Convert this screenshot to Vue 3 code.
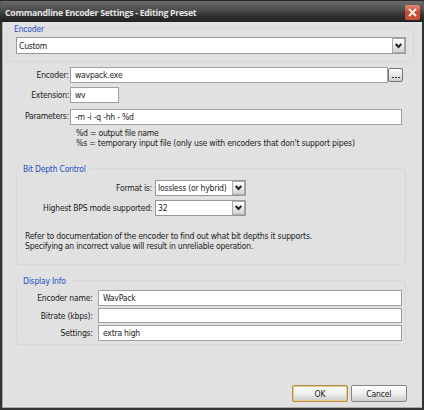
<template>
  <div class="window">
    <header class="title-bar">
      <h1 class="window-title"><span>Commandline Encoder Settings - Editing Preset</span></h1>
      <button class="close-button" aria-label="Close">
        <svg width="15" height="15" viewBox="0 0 15 15">
          <path d="M4 4L11 11M11 4L4 11" stroke="#fff5ee" stroke-width="2" />
        </svg>
      </button>
    </header>

    <main class="content">
      <!-- Encoder preset -->
      <section class="group group-encoder">
        <h2 class="group-title encoder-title"><span class="text">Encoder</span></h2>
        <div class="combo">
          <span class="combo-value"><span class="text">{{ preset }}</span></span>
          <span class="combo-button">
            <svg width="7" height="6" viewBox="0 0 7 6">
              <path d="M0.7 1L3.5 4L6.3 1" fill="none" stroke="#222" stroke-width="2" />
            </svg>
          </span>
        </div>
      </section>

      <!-- Command line -->
      <section class="command">
        <div v-for="field in commandFields" :key="field.key" class="field" :class="field.key">
          <label><span class="text">{{ field.label }}</span></label>
          <div class="field-input"><span class="text">{{ field.value }}</span></div>
          <button v-if="field.key === 'encoder'" class="browse"><i></i><i></i><i></i></button>
        </div>
        <p class="hint">
          <span class="text">%d = output file name</span><br>
          <span class="text wide">%s = temporary input file (only use with encoders that don't support pipes)</span>
        </p>
      </section>

      <!-- Bit depth -->
      <section class="group group-depth">
        <h2 class="group-title depth-title"><span class="text">Bit Depth Control</span></h2>
        <div v-for="mode in depthFields" :key="mode.key" class="field" :class="mode.key">
          <label><span class="text">{{ mode.label }}</span></label>
          <div class="combo">
            <span class="combo-value"><span class="text">{{ mode.value }}</span></span>
            <span class="combo-button">
              <svg width="7" height="6" viewBox="0 0 7 6">
                <path d="M0.7 1L3.5 4L6.3 1" fill="none" stroke="#222" stroke-width="2" />
              </svg>
            </span>
          </div>
        </div>
        <p class="note">
          <span class="text wide">Refer to documentation of the encoder to find out what bit depths it supports.</span><br>
          <span class="text">Specifying an incorrect value will result in unreliable operation.</span>
        </p>
      </section>

      <!-- Display info -->
      <section class="group group-display">
        <h2 class="group-title display-title"><span class="text">Display Info</span></h2>
        <div v-for="info in displayFields" :key="info.key" class="field" :class="info.key">
          <label><span class="text">{{ info.label }}</span></label>
          <div class="field-input"><span class="text">{{ info.value }}</span></div>
        </div>
      </section>

      <footer class="actions">
        <button class="action primary"><span class="text">OK</span></button>
        <button class="action"><span class="text">Cancel</span></button>
      </footer>
    </main>
  </div>
</template>

<script setup>
import { ref } from 'vue'

const preset = ref('Custom')

const commandFields = ref([
  { key: 'encoder', label: 'Encoder:', value: 'wavpack.exe' },
  { key: 'extension', label: 'Extension:', value: 'wv' },
  { key: 'parameters', label: 'Parameters:', value: '-m -i -q -hh - %d' }
])

const depthFields = ref([
  { key: 'format', label: 'Format is:', value: 'lossless (or hybrid)' },
  { key: 'bps', label: 'Highest BPS mode supported:', value: '32' }
])

const displayFields = ref([
  { key: 'name', label: 'Encoder name:', value: 'WavPack' },
  { key: 'bitrate', label: 'Bitrate (kbps):', value: '' },
  { key: 'settings', label: 'Settings:', value: 'extra high' }
])
</script>

<style>
body {
  background: #303030;
}
</style>

<style scoped>
.window {
  display: flex;
  flex-direction: column;
  box-sizing: border-box;
  width: 424px;
  height: 410px;
  padding: 0 2px 2px;
  overflow: hidden;
  border-radius: 4px 4px 0 0;
  background: #333;
  color: #222;
  font: 9.5px/10px "DejaVu Sans Condensed", "DejaVu Sans", sans-serif;
  font-stretch: condensed;
  white-space: nowrap;
}

.window * {
  box-sizing: border-box;
}

h1,
h2,
p {
  margin: 0;
  font-weight: normal;
}

button {
  padding: 0;
  font: inherit;
  color: inherit;
}

/* Narrow dialog lettering */
.text {
  display: inline-block;
  letter-spacing: -0.25px;
  transform: scaleX(0.9);
  transform-origin: left;
}

.text.wide {
  transform: scaleX(0.912);
}

label .text {
  transform-origin: right;
}

.action .text {
  transform-origin: center;
}

.title-bar {
  display: flex;
  flex: none;
  align-items: center;
  justify-content: space-between;
  height: 22px;
  margin: 0 -2px;
  padding: 2px 4px 0 5px;
  border-top: 1px solid #292929;
  background: linear-gradient(#6b6b6b, #4c4c4c 45%, #303030 70%, #222);
}

.window-title {
  font: bold 9.5px/12px "Open Sans", sans-serif;
  color: #e6e6e6;
}

.window-title span {
  display: inline-block;
  letter-spacing: -0.3px;
  transform: scaleX(0.92);
  transform-origin: left;
}

.close-button {
  display: flex;
  width: 15px;
  height: 15px;
  border: 0;
  border-radius: 2px;
  background: linear-gradient(#df8b78, #cf4830 50%, #c5523a);
}

.content {
  flex: 1;
  padding: 6px 7px 0 4px;
  border: 1px solid #aaa;
  border-top: 0;
  border-right-color: #ddd;
  background: #e1e1e1;
}

.group {
  position: relative;
  border: 1px solid #d8d8d8;
  border-radius: 3px;
}

.group-title {
  position: absolute;
  top: -6px;
  left: 3px;
  padding-left: 3px;
  background: #e1e1e1;
  color: #2551c4;
  font-size: 9.5px;
  line-height: 11px;
}

.encoder-title {
  width: 36px;
}

.depth-title {
  width: 70px;
}

.display-title {
  width: 51px;
}

.combo {
  display: flex;
  width: 91px;
  height: 16px;
  border: 1px solid #999;
  background: #fff;
}

.combo-value {
  flex: 1;
  min-width: 0;
  padding-left: 2px;
  line-height: 14px;
}

.combo-button {
  display: flex;
  flex: none;
  align-items: center;
  justify-content: center;
  width: 13px;
  border: 1px solid #aaa;
  background: linear-gradient(#fff, #d2d2d2);
}

.field {
  display: flex;
  align-items: center;
}

.field label {
  display: flex;
  flex: none;
  justify-content: flex-end;
}

.field-input {
  flex: 1;
  height: 16px;
  padding-left: 4px;
  border: 1px solid #a0a0a0;
  background: #fff;
  line-height: 14px;
}

.group-encoder {
  height: 34px;
  padding: 8px 8px 0;
}

.group-encoder .combo {
  width: 390px;
  height: 17px;
}

.group-encoder .combo-value {
  line-height: 16px;
}

.command {
  height: 106px;
  padding: 5px 12px 0 0;
}

.command label {
  width: 63px;
  padding-right: 1px;
}

.field.encoder {
  margin-right: -1px;
}

.field.extension {
  width: 112px;
  margin: 4px 0 6px;
}

.field.parameters label {
  padding-bottom: 2px;
}

.browse {
  display: flex;
  align-items: flex-end;
  justify-content: center;
  gap: 1px;
  width: 15px;
  height: 14px;
  padding-bottom: 3px;
  border: 1px solid #777;
  border-radius: 2px;
  background: linear-gradient(#fff, #cecece);
}

.browse i {
  width: 2px;
  height: 1px;
  background: #333;
}

.hint {
  padding: 3px 0 0 69px;
}

.group-depth {
  height: 97px;
  margin: 0 8px 0 9px;
  padding-top: 11px;
}

.group-depth label {
  width: 138px;
  padding-right: 3px;
}

.field.bps {
  margin-top: 4px;
}

.note {
  padding: 15px 0 0 8px;
}

.group-display {
  height: 65px;
  margin: 15px 8px 0 9px;
  padding: 9px 3px 0 0;
}

.group-display .field {
  margin-bottom: 2px;
}

.group-display .bitrate .field-input {
  height: 15px;
}

.group-display label {
  width: 81px;
  padding-right: 5px;
}

.actions {
  display: flex;
  justify-content: flex-end;
  gap: 3px;
  margin: 40px 7px 0 0;
}

.action {
  width: 56px;
  height: 17px;
  border: 1px solid #858585;
  border-radius: 2px;
  background: linear-gradient(#fff, #eee 50%, #ccc);
}

.action.primary {
  border-color: #b18b50;
  box-shadow: inset 0 0 0 1px #ecca8a;
}
</style>
